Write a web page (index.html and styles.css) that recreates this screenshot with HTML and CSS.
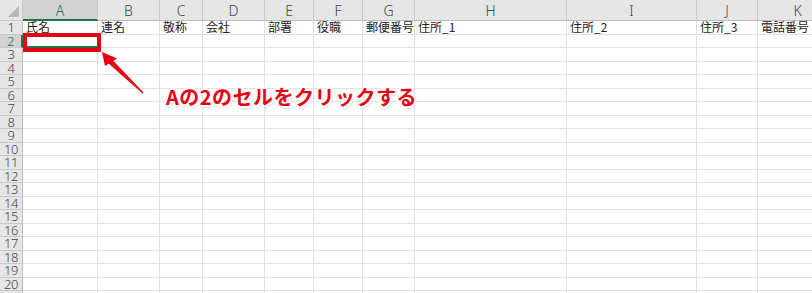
FILE: index.html
```html
<!DOCTYPE html>
<html lang="ja">
<head>
<meta charset="utf-8">
<link rel="stylesheet" href="styles.css">
</head>
<body>
<div class="sheet">
  <div class="corner"><span class="tri"></span></div>
  <div class="ch sel">A</div><div class="ch">B</div><div class="ch">C</div><div class="ch">D</div><div class="ch">E</div><div class="ch">F</div><div class="ch">G</div><div class="ch">H</div><div class="ch">I</div><div class="ch">J</div><div class="ch">K</div>

  <div class="rh">1</div><div class="c">氏名</div><div class="c">連名</div><div class="c">敬称</div><div class="c">会社</div><div class="c">部署</div><div class="c">役職</div><div class="c">郵便番号</div><div class="c">住所_1</div><div class="c">住所_2</div><div class="c">住所_3</div><div class="c">電話番号</div>
  <div class="rh rsel">2</div><div class="c active"></div><div class="c"></div><div class="c"></div><div class="c"></div><div class="c"></div><div class="c"></div><div class="c"></div><div class="c"></div><div class="c"></div><div class="c"></div><div class="c"></div>
  <div class="rh">3</div><div class="c"></div><div class="c"></div><div class="c"></div><div class="c"></div><div class="c"></div><div class="c"></div><div class="c"></div><div class="c"></div><div class="c"></div><div class="c"></div><div class="c"></div>
  <div class="rh">4</div><div class="c"></div><div class="c"></div><div class="c"></div><div class="c"></div><div class="c"></div><div class="c"></div><div class="c"></div><div class="c"></div><div class="c"></div><div class="c"></div><div class="c"></div>
  <div class="rh">5</div><div class="c"></div><div class="c"></div><div class="c"></div><div class="c"></div><div class="c"></div><div class="c"></div><div class="c"></div><div class="c"></div><div class="c"></div><div class="c"></div><div class="c"></div>
  <div class="rh">6</div><div class="c"></div><div class="c"></div><div class="c"></div><div class="c"></div><div class="c"></div><div class="c"></div><div class="c"></div><div class="c"></div><div class="c"></div><div class="c"></div><div class="c"></div>
  <div class="rh">7</div><div class="c"></div><div class="c"></div><div class="c"></div><div class="c"></div><div class="c"></div><div class="c"></div><div class="c"></div><div class="c"></div><div class="c"></div><div class="c"></div><div class="c"></div>
  <div class="rh">8</div><div class="c"></div><div class="c"></div><div class="c"></div><div class="c"></div><div class="c"></div><div class="c"></div><div class="c"></div><div class="c"></div><div class="c"></div><div class="c"></div><div class="c"></div>
  <div class="rh">9</div><div class="c"></div><div class="c"></div><div class="c"></div><div class="c"></div><div class="c"></div><div class="c"></div><div class="c"></div><div class="c"></div><div class="c"></div><div class="c"></div><div class="c"></div>
  <div class="rh">10</div><div class="c"></div><div class="c"></div><div class="c"></div><div class="c"></div><div class="c"></div><div class="c"></div><div class="c"></div><div class="c"></div><div class="c"></div><div class="c"></div><div class="c"></div>
  <div class="rh">11</div><div class="c"></div><div class="c"></div><div class="c"></div><div class="c"></div><div class="c"></div><div class="c"></div><div class="c"></div><div class="c"></div><div class="c"></div><div class="c"></div><div class="c"></div>
  <div class="rh">12</div><div class="c"></div><div class="c"></div><div class="c"></div><div class="c"></div><div class="c"></div><div class="c"></div><div class="c"></div><div class="c"></div><div class="c"></div><div class="c"></div><div class="c"></div>
  <div class="rh">13</div><div class="c"></div><div class="c"></div><div class="c"></div><div class="c"></div><div class="c"></div><div class="c"></div><div class="c"></div><div class="c"></div><div class="c"></div><div class="c"></div><div class="c"></div>
  <div class="rh">14</div><div class="c"></div><div class="c"></div><div class="c"></div><div class="c"></div><div class="c"></div><div class="c"></div><div class="c"></div><div class="c"></div><div class="c"></div><div class="c"></div><div class="c"></div>
  <div class="rh">15</div><div class="c"></div><div class="c"></div><div class="c"></div><div class="c"></div><div class="c"></div><div class="c"></div><div class="c"></div><div class="c"></div><div class="c"></div><div class="c"></div><div class="c"></div>
  <div class="rh">16</div><div class="c"></div><div class="c"></div><div class="c"></div><div class="c"></div><div class="c"></div><div class="c"></div><div class="c"></div><div class="c"></div><div class="c"></div><div class="c"></div><div class="c"></div>
  <div class="rh">17</div><div class="c"></div><div class="c"></div><div class="c"></div><div class="c"></div><div class="c"></div><div class="c"></div><div class="c"></div><div class="c"></div><div class="c"></div><div class="c"></div><div class="c"></div>
  <div class="rh">18</div><div class="c"></div><div class="c"></div><div class="c"></div><div class="c"></div><div class="c"></div><div class="c"></div><div class="c"></div><div class="c"></div><div class="c"></div><div class="c"></div><div class="c"></div>
  <div class="rh">19</div><div class="c"></div><div class="c"></div><div class="c"></div><div class="c"></div><div class="c"></div><div class="c"></div><div class="c"></div><div class="c"></div><div class="c"></div><div class="c"></div><div class="c"></div>
  <div class="rh">20</div><div class="c"></div><div class="c"></div><div class="c"></div><div class="c"></div><div class="c"></div><div class="c"></div><div class="c"></div><div class="c"></div><div class="c"></div><div class="c"></div><div class="c"></div>
  <div class="rh last"></div><div class="c"></div><div class="c"></div><div class="c"></div><div class="c"></div><div class="c"></div><div class="c"></div><div class="c"></div><div class="c"></div><div class="c"></div><div class="c"></div><div class="c"></div>
</div>

<div class="mark"></div>
<svg class="arrow" width="812" height="293" viewBox="0 0 812 293">
  <polygon points="110.5,58.5 113.5,61 143.5,92.5 142.5,93.5 108,63" fill="#e60012"/>
  <polygon points="102,52 117,58.5 105,66" fill="#e60012"/>
</svg>
<div class="note">Aの2のセルをクリックする</div>
</body>
</html>
```
FILE: styles.css
```css
html, body {
  margin: 0;
  padding: 0;
  background: #ffffff;
  overflow: hidden;
  width: 812px;
  height: 293px;
}

.sheet {
  display: grid;
  grid-template-columns: 23px 75px 62px 43px 62px 49px 49px 52px 152px 130px 61px 80px;
  grid-template-rows: 21px;
  grid-auto-rows: 13.5px;
  font-family: "Noto Sans CJK JP", "Noto Sans", sans-serif;
}

.corner {
  background: #e6e6e6;
  border-right: 1px solid #c8c8c8;
  border-bottom: 1px solid #c8c8c8;
  box-sizing: border-box;
  position: relative;
}
.tri {
  position: absolute;
  right: 3px;
  bottom: 3px;
  width: 0;
  height: 0;
  border-left: 11px solid transparent;
  border-bottom: 11px solid #b7b7b7;
}

.ch {
  background: #e6e6e6;
  border-right: 1px solid #c8c8c8;
  border-bottom: 1px solid #bdbdbd;
  box-sizing: border-box;
  font-family: "Noto Sans", "DejaVu Sans", sans-serif;
  font-size: 14px;
  font-weight: 300;
  color: #444444;
  text-align: center;
  line-height: 21px;
}
.ch.sel {
  background: #d2d2d2;
  color: #217346;
  border-bottom: 2px solid #217346;
}

.rh {
  background: #e6e6e6;
  border-right: 1px solid #bdbdbd;
  border-bottom: 1px solid #c8c8c8;
  box-sizing: border-box;
  font-family: "Noto Sans", "DejaVu Sans", sans-serif;
  font-size: 13px;
  font-weight: 300;
  color: #444444;
  text-align: center;
  line-height: 12.5px;
  letter-spacing: -0.5px;
}
.rh.rsel {
  background: #d2d2d2;
  color: #217346;
  border-right: 2px solid #217346;
}

.c {
  border-right: 1px solid #e1e1e1;
  border-bottom: 1px solid #e1e1e1;
  box-sizing: border-box;
  font-size: 12px;
  color: #222222;
  line-height: 12.5px;
  padding-left: 3px;
  white-space: nowrap;
}
.c.active {
  border: 1px solid #217346;
  border-bottom: 2px solid #217346;
}

.mark {
  position: absolute;
  left: 23px;
  top: 33px;
  width: 78px;
  height: 19px;
  box-sizing: border-box;
  border: 4px solid #e60012;
}

.arrow {
  position: absolute;
  left: 0;
  top: 0;
}

.note {
  position: absolute;
  left: 166px;
  top: 83px;
  font-family: "Noto Sans CJK JP", sans-serif;
  font-weight: 700;
  font-size: 20px;
  letter-spacing: 0.5px;
  line-height: 28px;
  color: #e60012;
  white-space: nowrap;
  text-shadow:
    -1.5px -1.5px 0 #fff, 1.5px -1.5px 0 #fff, -1.5px 1.5px 0 #fff, 1.5px 1.5px 0 #fff,
    0 -2px 0 #fff, 0 2px 0 #fff, -2px 0 0 #fff, 2px 0 0 #fff,
    1px 2px 3px rgba(0,0,0,0.35);
}
```
